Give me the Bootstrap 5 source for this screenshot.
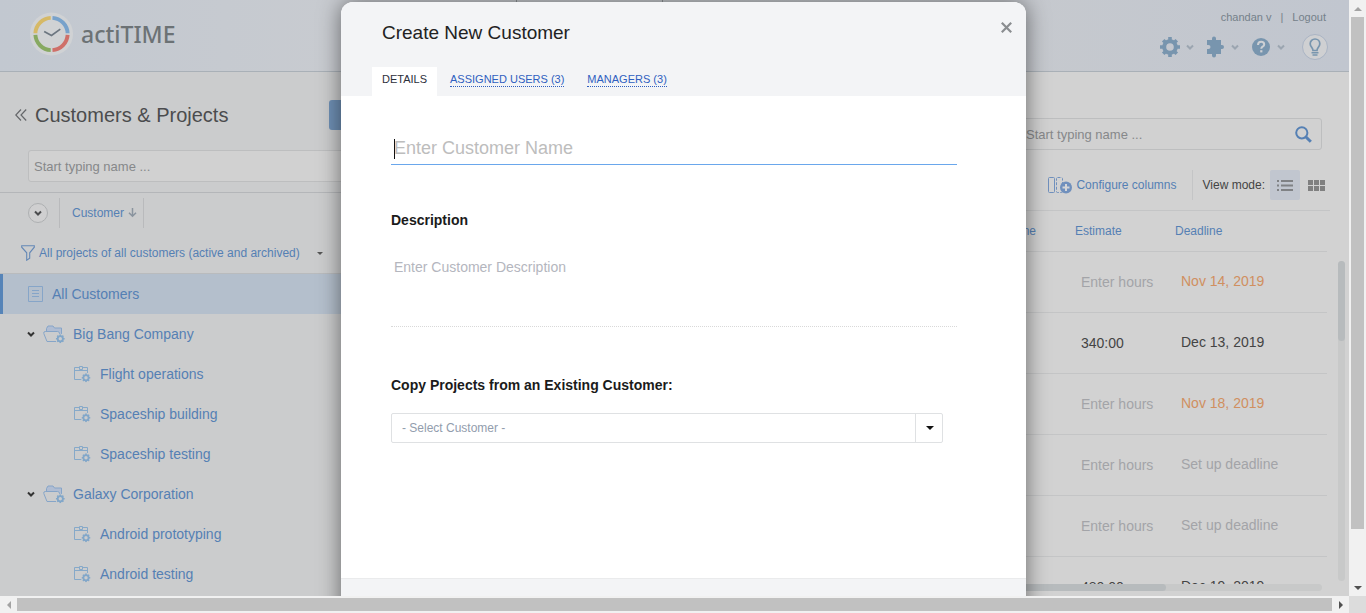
<!DOCTYPE html>
<html lang="en">
<head>
<meta charset="utf-8">
<meta name="viewport" content="width=device-width, initial-scale=1">
<title>actiTIME - Customers &amp; Projects</title>
<link href="https://cdn.jsdelivr.net/npm/bootstrap@5.3.0/dist/css/bootstrap.min.css" rel="stylesheet">
<style>
  :root { --blue: #5580b4; --soft-blue: #86a5c8; --line: #b9bbbd; --pane: #cbcccd; --sheet: #d2d2d2; }
  body { font-family: "Liberation Sans", Arial, sans-serif; font-size: 14px; line-height: 20px; color: #444; background: var(--sheet); }
  button, input, textarea, select { font-family: inherit; }
  svg { display: block; flex: none; }
  a { color: var(--blue); text-decoration: none; }
  .plain { border: 0; background: none; padding: 0; color: inherit; }
  .text12 { font-size: 12px; }

  /* window frame with its scroll bars */
  .frame { display: grid; grid-template: minmax(0, 1fr) 17px / minmax(0, 1fr) 17px; height: 100vh; }
  .rail { background: #f1f1f1; }
  .rail button { width: 17px; height: 17px; display: flex; align-items: center; justify-content: center; flex: none; }
  .thumb { background: #c1c1c1; }
  .rail-y .thumb { width: 13px; flex: 0 1 512px; }
  .rail-x .thumb { height: 13px; flex: 1; }
  .corner { background: #dcdcdc; }

  /* top bar */
  .topbar { height: 72px; border-bottom: 1px solid #a9b0b7; background: linear-gradient(90deg, #c2c8d0, #c8cbd0 25%, #c6c9ce 75%, #c1c6cf); padding: 0 21px 0 30px; }
  .brand { font-family: "Noto Sans", sans-serif; font-size: 23px; font-weight: 500; color: #6c7275; line-height: 30px; }
  .sections { margin: 0 auto 0 341px; width: 147px; border: solid #8f9499; border-width: 0 1px; }
  .account { font-size: 11px; line-height: 14px; color: #75818a; padding-right: 2px; }
  .account a { color: inherit; }
  .tool { display: flex; align-items: center; gap: 6px; color: #7895ae; }
  .bulb { width: 26px; height: 26px; border: 1px solid #aab4c4; border-radius: 50%; background: #cfd0d2; justify-content: center; }

  /* customer pane */
  .pane { width: 500px; background: var(--pane); flex: none; }
  .pane h1 { font-size: 20px; line-height: 30px; font-weight: 400; color: #4b4c4e; margin: 0; }
  .new-btn { height: 30px; width: 100px; border-radius: 3px; background: #6f90b5; color: #dde; }
  .find { height: 32px; border: 1px solid #bdbebf; border-radius: 3px; background: #d1d1d1; padding: 0 5px; font-size: 13px; color: #444; box-shadow: none; }
  .find::placeholder { color: #86888a; opacity: 1; }
  .sortbar { height: 41px; border-top: 1px solid #b4b6b9; }
  .filter { height: 41px; border-bottom: 1px solid var(--line); padding-left: 21px; color: var(--blue); }
  .divider { width: 1px; height: 30px; background: #b9babc; }
  .round { width: 20px; height: 20px; border: 1px solid #aeb0b2; border-radius: 50%; background: #cfcfd0; }
  .tree a { display: flex; align-items: center; height: 40px; }
  .tree .all { background: #b4bfcc; border-left: 3px solid #5684b8; padding-left: 25px; gap: 9px; }
  .tree .firm { padding-left: 27px; gap: 8px; }
  .tree .job { padding-left: 73px; gap: 9px; }

  /* task sheet */
  .sheet { padding-top: 46px; }
  .search-wrap { width: 302px; margin-right: 27px; }
  .search-wrap .glass { right: 10px; top: 8px; }
  .toolbar { height: 30px; margin: 20px 18px 10px 0; color: #444; }
  .mode { width: 30px; height: 30px; }
  .mode.on { background: #c1c6cf; border-radius: 2px; }
  .tasks { table-layout: fixed; width: calc(100% - 3px); border-collapse: separate; border-spacing: 0; }
  .tasks th { height: 41px; font-size: 12px; font-weight: 400; color: var(--blue); border-bottom: 1px solid #c4c5c6; padding: 0; }
  .tasks td { height: 61px; border-bottom: 1px solid #c4c5c6; padding: 0 6px 2px; }
  .tasks td.est { padding-bottom: 0; }
  .tasks .blank { color: #a3a4a8; }
  .tasks .late { color: #d08f60; }
  .bar { background: #c8c9c9; border-radius: 4px; flex: none; }
  .bar div { background: #b7bbbd; border-radius: 4px; }
  .bar-y { width: 7px; margin: 51px 4px 3px 8px; }
  .bar-y div { height: 80px; }
  .bar-x { height: 7px; margin: 0 27px 5px 0; }
  .bar-x div { height: 7px; width: 81%; }

  /* dialog */
  .veil { position: absolute; inset: 0 0 17px 0; overflow: hidden; padding: 2px 0 0 1px; pointer-events: none; }
  .dialog { width: 685px; max-width: 100%; background: #fff; border-radius: 12px; box-shadow: 0 0 22px rgba(0,0,0,.5); pointer-events: auto; overflow: hidden; align-self: flex-start; }
  .dialog-top { height: 94px; background: #f3f4f6; padding: 0 14px 0 31px; }
  .dialog h2 { font-size: 19px; line-height: 24px; font-weight: 400; color: #222; margin: 19px 0 0 10px; }
  .tabs { gap: 3px; font-size: 11px; }
  .tabs a { height: 29px; padding: 5px 10px 0; line-height: 14px; color: #2f5fc0; }
  .tabs a span { display: block; border-bottom: 1px dotted #2f5fc0; }
  .tabs a.on { background: #fff; color: #2c303a; }
  .tabs a.on span { border: 0; }
  .dialog-main { padding: 35px 69px 0 50px; height: 482px; }
  .dialog-main label { display: block; font-weight: 700; color: #1b1b1b; }
  .name { height: 34px; width: 100%; border: 0; border-bottom: 1px solid #6aa7ec; padding: 1px 3px 0; font-size: 18px; outline: 0; }
  .name::placeholder { color: #bdbdbd; }
  .cursor { left: 3px; top: 8px; width: 1px; height: 20px; background: #111; }
  .about { display: block; width: 100%; height: 75px; margin: 22px 0 48px; border: 0; border-bottom: 1px dotted #d9d9d9; padding: 5px 3px; resize: none; outline: 0; }
  .about::placeholder { color: #b4b6be; }
  .picker { margin: 18px 14px 0 0; }
  .picker select { appearance: none; width: 100%; height: 30px; border: 1px solid #dfe1e3; border-radius: 2px; background: #fff; color: #929dad; font-size: 12px; padding: 0 10px; }
  .picker span { right: 0; top: 0; width: 28px; height: 30px; border-left: 1px solid #dfe1e3; pointer-events: none; }
  .dialog-foot { height: 60px; background: #f3f4f6; border-top: 1px solid #eaebec; }
</style>
</head>
<body class="overflow-hidden">

<svg width="0" height="0" class="position-absolute" aria-hidden="true">
  <symbol id="cog" viewBox="0 0 20 20">
    <circle cx="10" cy="10" r="5.8" fill="none" stroke="currentColor" stroke-width="4"/>
    <g stroke="currentColor" stroke-width="3.6"><path d="M10 0v4M10 16v4M0 10h4M16 10h4M3.2 3.2 5.6 5.6M14.4 14.4l2.4 2.4M3.2 16.8l2.4-2.4M14.4 5.6l2.4-2.4"/></g>
  </symbol>
  <symbol id="chev" viewBox="0 0 8 8"><path d="M1 2.5 4 5.5 7 2.5" fill="none" stroke="currentColor" stroke-width="2"/></symbol>
  <symbol id="caret" viewBox="0 0 8 4"><path d="M0 0h8L4 4z" fill="currentColor"/></symbol>
  <symbol id="folder" viewBox="0 0 22 19">
    <path d="M3.5 6V3.5L5 1h5l1.500 2h7v8" fill="#b0bdd3" stroke="#86a5c8"/>
    <path d="M13 16.500H4L.8 8.500q-.4-2 1.400-2h12.500q1.300 0 1.600 1.300l.7 2.200" fill="#cbcccd" stroke="#86a5c8"/>
    <circle cx="17.300" cy="13.700" r="5" fill="#cbcccd"/>
    <use href="#cog" x="12.800" y="9.200" width="9" height="9" color="#82a7c9"/>
  </symbol>
  <symbol id="project" viewBox="0 0 18 17">
    <path d="M9 13.500H1.500V1.500h13v6M1.500 4.500h13" fill="none" stroke="#86a9c9"/>
    <path d="M6.500.5h3v3h-3z" fill="#cbcccd" stroke="#86a9c9"/>
    <circle cx="13" cy="11.800" r="5" fill="#cbcccd"/>
    <use href="#cog" x="8.500" y="7.300" width="9" height="9" color="#82a7c9"/>
  </symbol>
</svg>

<div class="frame position-relative">
  <div class="d-flex flex-column overflow-hidden">

    <header class="topbar d-flex justify-content-between flex-shrink-0">
      <a href="#" class="d-flex align-items-center gap-2 pb-1">
        <svg width="43" height="44" viewBox="0 0 44 44">
          <circle cx="22" cy="22" r="22" fill="#d0d2d4"/>
          <g fill="none" stroke-width="4">
            <path d="M5.500 21.200A16.500 16.500 0 0 1 21.200 5.500" stroke="#d6b966"/>
            <path d="M23 5.500A16.500 16.500 0 0 1 38.500 21.200" stroke="#78a2cb"/>
            <path d="M38.500 23A16.500 16.500 0 0 1 23 38.500" stroke="#cf7069"/>
            <path d="M21.200 38.500A16.500 16.500 0 0 1 5.500 23" stroke="#87a961"/>
          </g>
          <path d="M14.500 19.500 22 23.500l9-6.500" fill="none" stroke="#6c7680" stroke-width="1.800"/>
        </svg>
        <span class="brand">actiTIME</span>
      </a>
      <div class="sections"></div>
      <div class="d-flex flex-column align-items-end">
        <div class="account d-flex" style="gap:9px;margin-top:10px"><a href="#">chandan v</a><span>|</span><a href="#">Logout</a></div>
        <div class="d-flex align-items-center" style="margin-top:10px;gap:12px">
          <button class="plain tool" aria-label="Settings"><svg width="20" height="20"><use href="#cog"/></svg><svg width="8" height="8" color="#9ba5b0"><use href="#chev"/></svg></button>
          <button class="plain tool" aria-label="Add-ons"><svg width="19" height="22" viewBox="0 0 19 22"><path fill="currentColor" d="M1 4h5V2.500a2 2 0 1 1 4 0V4h5v5h1a2 2 0 1 1 0 4h-1v5h-5v1.500a2 2 0 1 1-4 0V18H1v-5h1.500a2 2 0 1 0 0-4H1z"/></svg><svg width="8" height="8" color="#9ba5b0"><use href="#chev"/></svg></button>
          <button class="plain tool" aria-label="Help"><svg width="20" height="20" viewBox="0 0 20 20"><circle cx="10" cy="10" r="9" fill="currentColor"/><path d="M7 8q.1-3.200 3.200-3.200 3 0 3 2.600 0 1.300-1.600 2.300-1.300.8-1.300 2" fill="none" stroke="#cdd0d4" stroke-width="2"/><path d="M9.200 13.200h2.200v2.200H9.200z" fill="#cdd0d4"/></svg><svg width="8" height="8" color="#9ba5b0"><use href="#chev"/></svg></button>
          <button class="plain tool bulb" style="margin-left:5px" aria-label="Tips"><svg width="12" height="18" viewBox="0 0 12 18"><path d="M4 12.500C4 9.800 1.200 8.800 1.200 5.800a4.800 4.800 0 0 1 9.600 0C10.800 8.800 8 9.800 8 12.500z" fill="none" stroke="currentColor" stroke-width="1.700"/><path d="M2.500 14.700h7M3.500 17h5" stroke="currentColor" stroke-width="1.500"/></svg></button>
        </div>
      </div>
    </header>

    <main class="d-flex flex-grow-1" style="min-height:0">
      <aside class="pane overflow-hidden">
        <div class="d-flex align-items-center" style="padding:28px 71px 0 15px">
          <button class="plain" aria-label="Collapse"><svg width="12" height="12" viewBox="0 0 12 12"><path d="M6 .5.800 6 6 11.500M11.200.5 6 6l5.200 5.500" fill="none" stroke="#65676a" stroke-width="1.200"/></svg></button>
          <h1 class="ms-2">Customers &amp; Projects</h1>
          <button class="plain new-btn ms-auto">+ Add New</button>
        </div>
        <div style="padding:20px 20px 10px 28px"><input class="find w-100" type="text" placeholder="Start typing name ..." aria-label="Find customer"></div>
        <div class="sortbar d-flex align-items-center text12" style="padding-left:28px">
          <button class="plain round d-flex align-items-center justify-content-center" aria-label="Expand all"><svg width="8" height="8" color="#4b4c4e"><use href="#chev"/></svg></button>
          <span class="divider" style="margin:0 12px 0 11px"></span>
          <a href="#" class="d-flex align-items-center gap-1">Customer <svg width="9" height="10" viewBox="0 0 9 10"><path d="M4.500 0v8M1 4.700l3.500 3.500L8 4.700" fill="none" stroke="#8a949e" stroke-width="1.500"/></svg></a>
          <span class="divider" style="margin-left:6px"></span>
        </div>
        <div class="filter d-flex align-items-center text12">
          <svg width="14" height="16" viewBox="0 0 14 16"><path d="M.7.7h12.600v1.500L8.700 7.800v5.400l-3 2V7.800L.7 2.200z" fill="none" stroke="#6488b6" stroke-width="1.100"/></svg>
          <button class="plain ms-1">All projects of all customers (active and archived)</button>
          <svg width="6" height="3" color="#555" style="margin-left:17px"><use href="#caret"/></svg>
        </div>
        <nav class="tree">
          <a href="#" class="all"><svg width="15" height="16" viewBox="0 0 15 16"><path d="M.5.5h14v15H.5zM4 4.500h7M4 7.500h7M4 10.500h7" fill="none" stroke="#86a5c8"/></svg>All Customers</a>
          <a href="#" class="firm"><svg width="8" height="8" color="#333"><use href="#chev"/></svg><svg width="22" height="19"><use href="#folder"/></svg>Big Bang Company</a>
          <a href="#" class="job"><svg width="18" height="17"><use href="#project"/></svg>Flight operations</a>
          <a href="#" class="job"><svg width="18" height="17"><use href="#project"/></svg>Spaceship building</a>
          <a href="#" class="job"><svg width="18" height="17"><use href="#project"/></svg>Spaceship testing</a>
          <a href="#" class="firm"><svg width="8" height="8" color="#333"><use href="#chev"/></svg><svg width="22" height="19"><use href="#folder"/></svg>Galaxy Corporation</a>
          <a href="#" class="job"><svg width="18" height="17"><use href="#project"/></svg>Android prototyping</a>
          <a href="#" class="job"><svg width="18" height="17"><use href="#project"/></svg>Android testing</a>
        </nav>
      </aside>

      <section class="sheet d-flex flex-column flex-grow-1" style="min-width:0">
        <div class="search-wrap position-relative ms-auto">
          <input class="find w-100" type="text" placeholder="Start typing name ..." aria-label="Find task">
          <button class="plain glass position-absolute" aria-label="Search"><svg width="17" height="17" viewBox="0 0 17 17"><circle cx="6.800" cy="6.800" r="5.600" fill="none" stroke="#5580b4" stroke-width="2"/><path d="m11 11 4.800 4.800" stroke="#5580b4" stroke-width="3"/></svg></button>
        </div>
        <div class="toolbar d-flex align-items-center justify-content-end text12">
          <a href="#" class="d-flex align-items-center gap-1">
            <svg width="24" height="17" viewBox="0 0 24 17"><rect x=".5" y=".5" width="6" height="15" rx="1" fill="none" stroke="#7090bd"/><rect x="8.500" y=".5" width="6" height="15" rx="1" fill="none" stroke="#7090bd" stroke-dasharray="3 1.500"/><circle cx="18" cy="10.500" r="6" fill="#7090bd"/><path d="M18 7v7M14.500 10.500h7" stroke="#d5d6d8" stroke-width="2"/></svg>
            Configure columns</a>
          <span class="divider" style="margin:0 10px 0 15px;background:#c4c5c6"></span>
          <span>View mode:</span>
          <button class="plain mode on d-flex align-items-center justify-content-center" style="margin-left:5px" aria-label="List"><svg width="16" height="11" viewBox="0 0 16 11"><path d="M0 1h2M0 5.500h2M0 10h2M4 1h12M4 5.500h12M4 10h12" stroke="#808285" stroke-width="1.800"/></svg></button>
          <button class="plain mode d-flex align-items-center justify-content-center" aria-label="Tiles" style="margin-left:1px"><svg width="17" height="11" viewBox="0 0 17 11"><path d="M0 0h5v5H0zM6 0h5v5H6zM12 0h5v5h-5zM0 6h5v5H0zM6 6h5v5H6zM12 6h5v5h-5z" fill="#808080"/></svg></button>
        </div>
        <div class="d-flex flex-grow-1" style="min-height:0">
          <div class="flex-grow-1 overflow-hidden" style="border-top:1px solid #c4c5c6">
            <table class="tasks">
              <colgroup><col><col style="width:120px"><col style="width:100px"><col style="width:152px"></colgroup>
              <thead><tr><th>Task</th><th class="text-end" style="padding-right:39px">Timeline</th><th>Estimate</th><th>Deadline</th></tr></thead>
              <tbody>
                <tr><td></td><td></td><td class="est blank">Enter hours</td><td class="late">Nov 14, 2019</td></tr>
                <tr><td></td><td></td><td class="est">340:00</td><td>Dec 13, 2019</td></tr>
                <tr><td></td><td></td><td class="est blank">Enter hours</td><td class="late">Nov 18, 2019</td></tr>
                <tr><td></td><td></td><td class="est blank">Enter hours</td><td class="blank">Set up deadline</td></tr>
                <tr><td></td><td></td><td class="est blank">Enter hours</td><td class="blank">Set up deadline</td></tr>
                <tr><td></td><td></td><td class="est">480:00</td><td>Dec 19, 2019</td></tr>
              </tbody>
            </table>
          </div>
          <div class="bar bar-y"><div></div></div>
        </div>
        <div class="bar bar-x"><div></div></div>
      </section>
    </main>
  </div>

  <div class="rail rail-y d-flex flex-column align-items-center">
    <button class="plain" aria-label="Scroll up"><svg width="8" height="4" viewBox="0 0 8 4"><path d="M0 4h8L4 0z" fill="#a3a3a3"/></svg></button>
    <div class="thumb"></div>
    <button class="plain mt-auto" aria-label="Scroll down"><svg width="8" height="4" color="#505050"><use href="#caret"/></svg></button>
  </div>
  <div class="rail rail-x d-flex align-items-center">
    <button class="plain" aria-label="Scroll left"><svg width="4" height="8" viewBox="0 0 4 8"><path d="M4 0v8L0 4z" fill="#a3a3a3"/></svg></button>
    <div class="thumb"></div>
    <button class="plain" aria-label="Scroll right"><svg width="4" height="8" viewBox="0 0 4 8"><path d="M0 0v8l4-4z" fill="#505050"/></svg></button>
  </div>
  <div class="corner"></div>

  <div class="veil d-flex justify-content-center">
    <div class="dialog" role="dialog" aria-labelledby="dialogTitle">
      <div class="dialog-top d-flex justify-content-between">
        <div class="d-flex flex-column justify-content-between">
          <h2 id="dialogTitle">Create New Customer</h2>
          <nav class="tabs d-flex">
            <a href="#" class="on"><span>DETAILS</span></a>
            <a href="#"><span>ASSIGNED USERS (3)</span></a>
            <a href="#"><span>MANAGERS (3)</span></a>
          </nav>
        </div>
        <button class="plain align-self-start" style="margin-top:20px" aria-label="Close"><svg width="11" height="11" viewBox="0 0 11 11"><path d="m.8.800 9.400 9.400M10.200.8.800 10.200" stroke="#8a8d90" stroke-width="2.200"/></svg></button>
      </div>
      <form class="dialog-main">
        <div class="position-relative" style="margin-bottom:45px">
          <input class="name" type="text" placeholder="Enter Customer Name" aria-label="Customer name">
          <span class="cursor position-absolute"></span>
        </div>
        <label for="about">Description</label>
        <textarea class="about" id="about" placeholder="Enter Customer Description"></textarea>
        <label for="source">Copy Projects from an Existing Customer:</label>
        <div class="picker position-relative">
          <select id="source"><option>- Select Customer -</option></select>
          <span class="position-absolute d-flex align-items-center justify-content-center"><svg width="8" height="4" color="#111"><use href="#caret"/></svg></span>
        </div>
      </form>
      <div class="dialog-foot"></div>
    </div>
  </div>
</div>

<script src="https://cdn.jsdelivr.net/npm/bootstrap@5.3.0/dist/js/bootstrap.bundle.min.js"></script>
</body>
</html>
